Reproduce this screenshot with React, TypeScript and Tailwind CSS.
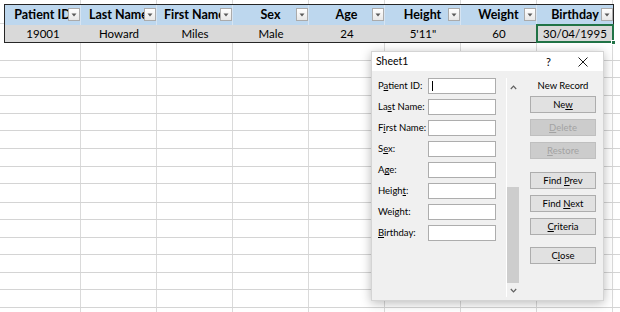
import React from "react";

const cols = ["Patient ID", "Last Name", "First Name", "Sex", "Age", "Height", "Weight", "Birthday"];
const data = ["19001", "Howard", "Miles", "Male", "24", "5'11\"", "60", "30/04/1995"];
const rowHeights = [
  "h-[18px]", "h-[17px]", "h-[18px]", "h-[18px]", "h-[17px]", "h-[18px]", "h-[18px]", "h-[17px]",
  "h-[19px]", "h-[17px]", "h-[18px]", "h-[17px]", "h-[18px]", "h-[17px]", "h-[18px]", "h-[17px]",
];

function FilterBtn() {
  return (
    <div className="absolute right-0 top-[3px] w-[12px] h-[13px] border border-[#ababab] bg-gradient-to-b from-white to-[#e8e8e8] flex items-center justify-center">
      <svg width="6" height="4" viewBox="0 0 6 4">
        <path d="M0.5 0.5 L5.5 0.5 L3 3.5 Z" fill="#5a5a5a" />
      </svg>
    </div>
  );
}

function U({ children }: { children: React.ReactNode }) {
  return <span className="underline underline-offset-[1px]">{children}</span>;
}

function Btn({ children, disabled }: { children: React.ReactNode; disabled?: boolean }) {
  return (
    <div
      className={
        disabled
          ? "h-[17px] w-[66px] border border-[#bfbfbf] bg-[#cccccc] text-[#a3a3a3] flex items-center justify-center text-[9.5px] leading-none"
          : "h-[17px] w-[66px] border border-[#adadad] bg-[#e1e1e1] text-black flex items-center justify-center text-[9.5px] leading-none"
      }
    >
      <span>{children}</span>
    </div>
  );
}

const fields: React.ReactNode[] = [
  <>P<U>a</U>tient ID:</>,
  <>La<U>s</U>t Name:</>,
  <>F<U>i</U>rst Name:</>,
  <>S<U>e</U>x:</>,
  <>A<U>g</U>e:</>,
  <>Heigh<U>t</U>:</>,
  <>Weight:</>,
  <><U>B</U>irthday:</>,
];

function Dialog() {
  return (
    <div className="absolute left-[371px] top-[51px] w-[233px] h-[250px] border border-[#d4d4d4] shadow-[0_2px_10px_rgba(0,0,0,0.28)] flex flex-col font-['Lato',sans-serif] text-black">
      <div className="h-[19px] bg-white flex items-center pl-[4px] pr-[15px]">
        <span className="text-[10.5px] leading-none flex-1">Sheet1</span>
        <span className="text-[11px] leading-none mr-[27px]">?</span>
        <svg width="10" height="10" viewBox="0 0 10 10">
          <path d="M0.5 0.5 L9.5 9.5 M9.5 0.5 L0.5 9.5" stroke="#1a1a1a" strokeWidth="1" />
        </svg>
      </div>
      <div className="flex-1 bg-[#f0f0f0] flex">
        <div className="w-[134px] pl-[6px] pt-[7px] flex flex-col gap-[5px]">
          {fields.map((f, i) => (
            <div key={i} className="flex items-center h-[16px]">
              <div className="w-[50px] text-[9.5px] leading-none whitespace-nowrap">{f}</div>
              <div className="w-[68px] h-[16px] border border-[#adadad] bg-white flex items-center pl-[3px]">
                {i === 0 && <div className="w-px h-[10px] bg-black" />}
              </div>
            </div>
          ))}
        </div>
        <div className="mt-[7px] h-[219px] w-[13px] border-l border-white flex flex-col">
          <div className="h-[18px] flex items-center justify-center">
            <svg width="7" height="5" viewBox="0 0 7 5">
              <path d="M0.8 4 L3.5 1.2 L6.2 4" stroke="#606060" strokeWidth="1.2" fill="none" />
            </svg>
          </div>
          <div className="h-[91px]" />
          <div className="h-[96px] bg-[#cdcdcd]" />
          <div className="h-[14px] flex items-center justify-center">
            <svg width="7" height="5" viewBox="0 0 7 5">
              <path d="M0.8 1 L3.5 3.8 L6.2 1" stroke="#606060" strokeWidth="1.2" fill="none" />
            </svg>
          </div>
        </div>
        <div className="ml-[11px] w-[66px] pt-[8px] flex flex-col">
          <div className="h-[14px] flex items-center justify-center text-[9.5px] leading-none">New Record</div>
          <div className="mt-[3px]"><Btn>Ne<U>w</U></Btn></div>
          <div className="mt-[6px]"><Btn disabled><U>D</U>elete</Btn></div>
          <div className="mt-[6px]"><Btn disabled><U>R</U>estore</Btn></div>
          <div className="mt-[13px]"><Btn>Find <U>P</U>rev</Btn></div>
          <div className="mt-[6px]"><Btn>Find <U>N</U>ext</Btn></div>
          <div className="mt-[6px]"><Btn><U>C</U>riteria</Btn></div>
          <div className="mt-[12px]"><Btn>C<U>l</U>ose</Btn></div>
        </div>
      </div>
    </div>
  );
}

export default function App() {
  return (
    <div className="relative w-[620px] h-[312px] bg-white overflow-hidden font-['Lato',sans-serif] text-black">
      <div className="flex h-[4px]">
        <div className="w-[5px]" />
        {cols.map((c) => (
          <div key={c} className="w-[76px] border-r border-[#dadada]" />
        ))}
      </div>
      <div className="flex">
        <div className="w-[4px] flex flex-col">
          <div className="h-[20px] border-b border-[#dadada]" />
        </div>
        <div className="border border-[#262626] flex flex-col">
          <div className="flex h-[20px] bg-[#bdd7ee]">
            {cols.map((c) => (
              <div key={c} className="relative w-[76px] border-r border-[#d6e4f2] last:border-r-0 overflow-hidden">
                <div className="h-full flex items-center justify-center whitespace-nowrap text-[12.5px] font-bold leading-none">
                  {c}
                </div>
                <FilterBtn />
              </div>
            ))}
          </div>
          <div className="flex h-[17px] bg-[#d9d9d9]">
            {data.map((d, i) => (
              <div key={i} className="relative w-[76px] flex items-center justify-center text-[11.5px] leading-none whitespace-nowrap">
                {d}
                {i === 7 && (
                  <>
                    <div className="absolute left-[-1px] top-[-1px] right-[-1px] bottom-[-1px] border-2 border-[#217346]" />
                    <div className="absolute right-[-3px] bottom-[-3px] w-[5px] h-[5px] bg-[#217346] border border-white" />
                  </>
                )}
              </div>
            ))}
          </div>
        </div>
      </div>
      <div className="flex flex-col">
        {rowHeights.map((h, r) => (
          <div key={r} className={"flex border-b border-[#d4d4d4] " + h}>
            <div className="w-[5px]" />
            {cols.map((c) => (
              <div key={c} className="w-[76px] border-r border-[#dadada]" />
            ))}
          </div>
        ))}
      </div>
      <Dialog />
    </div>
  );
}
